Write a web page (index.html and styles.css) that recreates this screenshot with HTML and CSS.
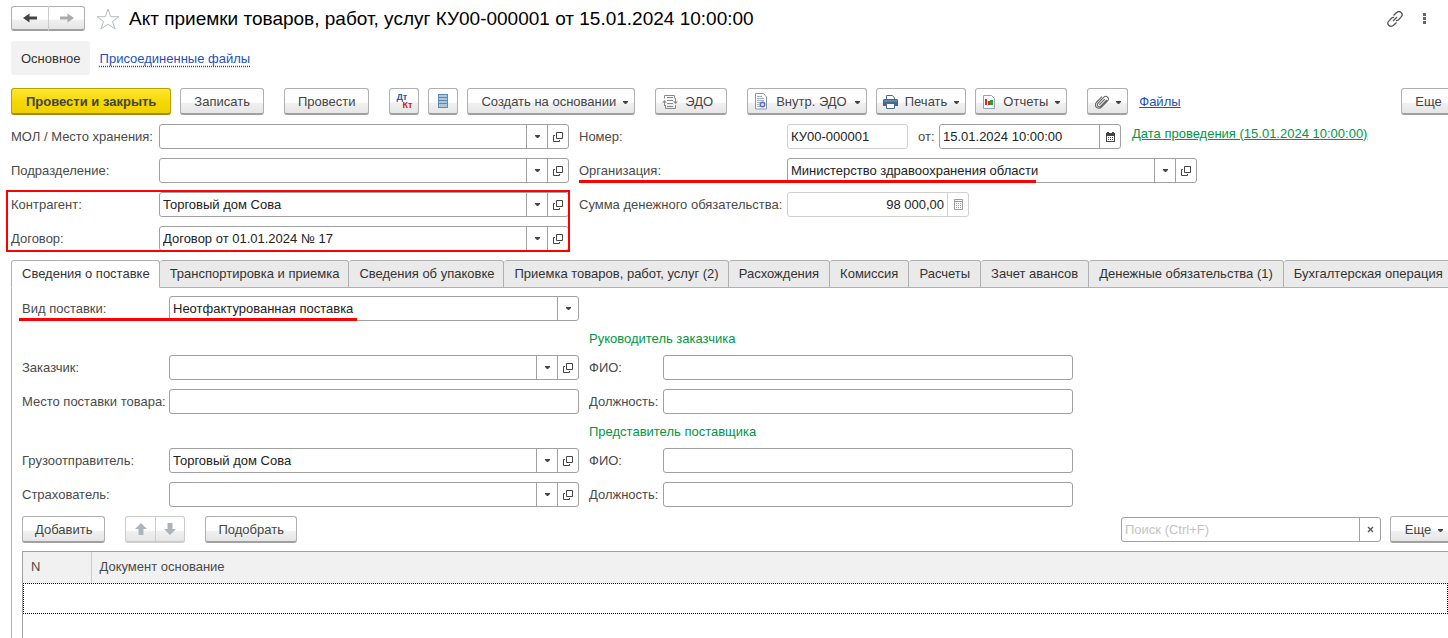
FILE: index.html
```html
<!DOCTYPE html>
<html lang="ru">
<head>
<meta charset="utf-8">
<title>Акт приемки товаров, работ, услуг</title>
<link rel="stylesheet" href="styles.css">
</head>
<body>
<svg class="sprite" aria-hidden="true">
  <symbol id="caret" viewBox="0 0 5 3"><path d="M0 0h5v1L3 3H2L0 1z" fill="currentColor"/></symbol>
  <symbol id="open" viewBox="0 0 10 10"><path d="M3.500.500h6v6h-6zM2 3.500H.500v6h6V8" fill="none" stroke="currentColor"/></symbol>
</svg>
<div class="page">
  <header class="titlebar">
    <div class="pair">
      <button class="btn" aria-label="Назад"><svg width="14" height="12" viewBox="0 0 14 12"><path d="M14 4.500v3H6.500v3L0 6l6.500-4.500v3z" fill="#444"/></svg></button>
      <button class="btn" aria-label="Вперед"><svg width="14" height="12" viewBox="0 0 14 12"><path d="M0 4.500v3h7.500v3L14 6 7.500 1.500v3z" fill="#aaa"/></svg></button>
    </div>
    <button class="plain star" aria-label="В избранное"><svg width="24" height="22" viewBox="0 0 24 22"><path d="M12 1l2.700 7.700H23l-6.600 4.800L19 21l-7-4.700L5 21l2.600-7.500L1 8.700h8.300z" fill="none" stroke="#b4bcc4"/></svg></button>
    <h1>Акт приемки товаров, работ, услуг КУ00-000001 от 15.01.2024 10:00:00</h1>
    <button class="plain" aria-label="Ссылка"><svg width="16" height="16" viewBox="0 0 16 16" fill="none" stroke="#555" stroke-width="1.300"><path d="M6.500 4.500L9.700 1.600a2.900 2.900 0 0 1 4.500 4.300l-2.600 2.900q-1.200 1-2.700.700M9.500 11.500l-3.200 2.900A2.900 2.900 0 0 1 1.800 10.100l2.600-2.900q1.200-1 2.700-.700M6 10l4-4"/></svg></button>
    <button class="plain menu" aria-label="Меню"><svg width="3" height="11" viewBox="0 0 3 11" fill="#666"><path d="M0 0h3v3H0zM0 4h3v3H0zM0 8h3v3H0z"/></svg></button>
  </header>

  <nav class="sections">
    <span class="current">Основное</span>
    <a href="#files">Присоединенные файлы</a>
  </nav>

  <div class="toolbar">
    <div class="group"><button class="btn primary">Провести и закрыть</button><button class="btn">Записать</button></div>
    <div class="group"><button class="btn">Провести</button></div>
    <div class="group">
      <button class="btn icon" aria-label="Проводки"><span class="dtkt"><b>Дт</b><b class="kt">Кт</b></span></button>
      <button class="btn icon" aria-label="Журнал"><svg width="12" height="14" viewBox="0 0 12 14"><path d="M1 0h10v14H1z" fill="#a9c8e0"/><path d="M1 .500h10M1 3.500h10M1 6.500h10M1 9.500h10M1 13.500h10M1.500 0v14M10.500 0v14" stroke="#5f8bb0"/></svg></button>
      <button class="btn menu-btn">Создать на основании<svg class="caret"><use href="#caret"/></svg></button>
    </div>
    <div class="group"><button class="btn pic solo"><svg width="16" height="14" viewBox="0 0 16 14" fill="none" stroke="#888"><path d="M2.500 3.500v-3h10v3M13.500 10v3.500h-10V10M5 2.500h6M5 5.500h6M5 8.500h6M5 11.500h6M2.500 11V6M13.500 3v5"/><path d="M0 7.500L2.500 5 5 7.500zM11 6.500L13.500 9 16 6.500z" fill="#888" stroke="none"/></svg>ЭДО</button></div>
    <div class="group">
      <button class="btn pic wide"><svg width="14" height="17" viewBox="0 0 14 17"><path d="M1.500.500h8L12.500 4v12h-11z" fill="#fff" stroke="#8098ae"/><path d="M3 3.500h5M3 5.500h7M3 7.500h7M3 9.500h3M3 11.500h2M3 13.500h3" stroke="#9ab0c4"/><circle cx="8.500" cy="11.500" r="2.300" fill="#dde" stroke="#6468c4" stroke-width="1.500"/></svg>Внутр. ЭДО<svg class="caret"><use href="#caret"/></svg></button>
      <button class="btn pic"><svg width="15" height="14" viewBox="0 0 15 14"><path d="M3.500 4V.500h6L11.500 3v2" fill="#fff" stroke="#466a88"/><path d="M1 4h13l1 1v6H0V5z" fill="#42698c"/><path d="M1 6h13" stroke="#7fa5c4"/><path d="M3.500 8.500h8v5h-8z" fill="#fff" stroke="#466a88"/></svg>Печать<svg class="caret"><use href="#caret"/></svg></button>
      <button class="btn pic"><svg width="14" height="14" viewBox="0 0 14 14"><path d="M1.500.500h8l3 3v10h-11z" fill="#fff" stroke="#8fa3b5"/><path d="M3 4h2v6H3z" fill="#e02818"/><path d="M6 6h2v4H6z" fill="#d03020"/><path d="M8 5h3v5H8z" fill="#28a038"/></svg>Отчеты<svg class="caret"><use href="#caret"/></svg></button>
    </div>
    <div class="group">
      <button class="btn menu-btn clip" aria-label="Вложения"><svg width="14" height="14" viewBox="0 0 14 14" fill="none" stroke="#666" stroke-width="1.100"><path d="M11.800 5l-6 6.200a2 2 0 0 1-2.900-2.900l6-6.100a2.500 2.500 0 0 1 3.700 3.600l-6.200 6.300A3.200 3.200 0 0 1 1.300 7.500L7 1.700M4.300 9.700l5.500-5.500"/></svg><svg class="caret"><use href="#caret"/></svg></button>
      <a class="files" href="#files">Файлы</a>
    </div>
    <button class="btn more">Еще<svg class="caret"><use href="#caret"/></svg></button>
  </div>

  <div class="head-form">
    <div class="column">
      <div class="row"><label for="mol">МОЛ / Место хранения:</label><div class="field"><input id="mol"><button aria-label="Выбрать"><svg class="caret"><use href="#caret"/></svg></button><button aria-label="Открыть"><svg class="open"><use href="#open"/></svg></button></div></div>
      <div class="row"><label for="dep">Подразделение:</label><div class="field"><input id="dep"><button aria-label="Выбрать"><svg class="caret"><use href="#caret"/></svg></button><button aria-label="Открыть"><svg class="open"><use href="#open"/></svg></button></div></div>
      <div class="column boxed">
        <div class="row"><label for="agent">Контрагент:</label><div class="field"><input id="agent" value="Торговый дом Сова"><button aria-label="Выбрать"><svg class="caret"><use href="#caret"/></svg></button><button aria-label="Открыть"><svg class="open"><use href="#open"/></svg></button></div></div>
        <div class="row"><label for="contract">Договор:</label><div class="field"><input id="contract" value="Договор от 01.01.2024 № 17"><button aria-label="Выбрать"><svg class="caret"><use href="#caret"/></svg></button><button aria-label="Открыть"><svg class="open"><use href="#open"/></svg></button></div></div>
      </div>
    </div>
    <div class="column right">
      <div class="row"><label for="num">Номер:</label><div class="field muted number"><input id="num" value="КУ00-000001" readonly></div><label class="from" for="date">от:</label><div class="field short"><input id="date" value="15.01.2024 10:00:00"><button aria-label="Календарь"><svg width="9" height="10" viewBox="0 0 9 10"><path d="M0 1h1V0h2v1h3V0h2v1h1v9H0z" fill="#444"/><path d="M1 4h7v5H1z" fill="#fff"/><path d="M2 5.500h5M2 7.500h5" stroke="#444" stroke-dasharray="1 1"/></svg></button></div><a class="posted" href="#date">Дата проведения (15.01.2024 10:00:00)</a></div>
      <div class="row marked org"><label for="org">Организация:</label><div class="field"><input id="org" value="Министерство здравоохранения области"><button aria-label="Выбрать"><svg class="caret"><use href="#caret"/></svg></button><button aria-label="Открыть"><svg class="open"><use href="#open"/></svg></button></div></div>
      <div class="row"><label for="sum">Сумма денежного обязательства:</label><div class="field muted short"><input id="sum" class="amount" value="98 000,00" readonly><button aria-label="Калькулятор"><svg width="9" height="11" viewBox="0 0 9 11" fill="none" stroke="#999"><path d="M.500.500h8v10h-8zM1 2.500h7"/><path d="M2 4.500h6M2 6.500h6M2 8.500h6" stroke-dasharray="1 1"/></svg></button></div></div>
    </div>
  </div>

  <div class="tabs" role="tablist">
    <button role="tab" aria-selected="true">Сведения о поставке</button>
    <button role="tab">Транспортировка и приемка</button>
    <button role="tab">Сведения об упаковке</button>
    <button role="tab">Приемка товаров, работ, услуг (2)</button>
    <button role="tab">Расхождения</button>
    <button role="tab">Комиссия</button>
    <button role="tab">Расчеты</button>
    <button role="tab">Зачет авансов</button>
    <button role="tab">Денежные обязательства (1)</button>
    <button role="tab">Бухгалтерская операция</button>
  </div>

  <main class="panel">
    <div class="row marked kind"><label for="kind">Вид поставки:</label><div class="field"><select id="kind"><option>Неотфактурованная поставка</option></select><span class="drop"><svg class="caret"><use href="#caret"/></svg></span></div></div>
    <h2>Руководитель заказчика</h2>
    <div class="lines">
      <div class="row"><label for="customer">Заказчик:</label><div class="field"><input id="customer"><button aria-label="Выбрать"><svg class="caret"><use href="#caret"/></svg></button><button aria-label="Открыть"><svg class="open"><use href="#open"/></svg></button></div><label class="person" for="fio1">ФИО:</label><div class="field"><input id="fio1"></div></div>
      <div class="row"><label for="place">Место поставки товара:</label><div class="field"><input id="place"></div><label class="person" for="post1">Должность:</label><div class="field"><input id="post1"></div></div>
    </div>
    <h2>Представитель поставщика</h2>
    <div class="lines">
      <div class="row"><label for="shipper">Грузоотправитель:</label><div class="field"><input id="shipper" value="Торговый дом Сова"><button aria-label="Выбрать"><svg class="caret"><use href="#caret"/></svg></button><button aria-label="Открыть"><svg class="open"><use href="#open"/></svg></button></div><label class="person" for="fio2">ФИО:</label><div class="field"><input id="fio2"></div></div>
      <div class="row"><label for="insurer">Страхователь:</label><div class="field"><input id="insurer"><button aria-label="Выбрать"><svg class="caret"><use href="#caret"/></svg></button><button aria-label="Открыть"><svg class="open"><use href="#open"/></svg></button></div><label class="person" for="post2">Должность:</label><div class="field"><input id="post2"></div></div>
    </div>
    <div class="commands">
      <button class="btn">Добавить</button>
      <div class="pair faded">
        <button class="btn" aria-label="Вверх"><svg width="12" height="12" viewBox="0 0 12 12"><path d="M6 0l6 6H8.500v6h-5V6H0z" fill="#adb5ba"/></svg></button>
        <button class="btn" aria-label="Вниз"><svg width="12" height="12" viewBox="0 0 12 12"><path d="M6 12l6-6H8.500V0h-5v6H0z" fill="#adb5ba"/></svg></button>
      </div>
      <button class="btn">Подобрать</button>
      <div class="field search"><input aria-label="Поиск" placeholder="Поиск (Ctrl+F)"><button aria-label="Очистить"><svg width="7" height="7" viewBox="0 0 7 7"><path d="M1 1l5 5M6 1L1 6" stroke="#555" stroke-width="1.300"/></svg></button></div>
      <button class="btn more">Еще<svg class="caret"><use href="#caret"/></svg></button>
    </div>
    <div class="sheet">
      <table>
        <thead><tr><th class="n">N</th><th>Документ основание</th></tr></thead>
        <tbody><tr><td></td><td></td></tr></tbody>
      </table>
    </div>
  </main>
</div>
</body>
</html>
```
FILE: styles.css
```css
* { box-sizing: border-box; }
body { margin: 0; overflow: hidden; background: #fff; color: #4a4a4a; font: 13px/16px "Liberation Sans", Arial, sans-serif; }
button, input, select { font: inherit; color: inherit; margin: 0; }
svg { display: block; flex: none; }
a { color: #1f4fb8; }
.sprite { display: none; }
.page { display: flex; flex-direction: column; min-height: 100vh; padding: 6px 0 0 11px; }
.caret { width: 5px; height: 3px; color: #444; }
.open { width: 10px; height: 10px; color: #444; }

.btn { display: inline-flex; align-items: center; justify-content: center; flex: none; height: 27px; padding: 1px 13px 0; border: 1px solid #b0b0b0; border-bottom: 2px solid #a0a0a0; border-radius: 3px; background: linear-gradient(#fff 55%, #f0f0f0 60%, #e6e6e6); color: #444; white-space: nowrap; }
.btn .caret { margin: 1px 0 0 7px; }
.plain { padding: 0; border: 0; background: none; }
.primary { padding: 1px 14px 0; border-color: #b8a000; border-bottom-color: #a08c00; background: linear-gradient(#ffe733, #f5d800 55%, #f0d000); font-weight: bold; }
.icon { width: 30px; padding: 0; }
.menu-btn { padding-right: 6px; }
.pic { padding: 1px 6px 0; gap: 7px; }
.pic.wide { gap: 8px; }
.pic .caret { margin-left: 0; }
.solo { padding-right: 13px; }
.pair { display: flex; }
.pair .btn { width: 37px; height: 25px; padding: 0; }
.pair .btn:first-child { border-radius: 3px 0 0 3px; border-right: 0; }
.pair .btn:last-child { border-left-color: #ccc; border-radius: 0 3px 3px 0; }

.titlebar { display: flex; align-items: center; height: 25px; }
.titlebar h1 { flex: 1; margin: 0; font-size: 19px; line-height: 22px; font-weight: normal; color: #000; white-space: nowrap; }
.star { margin: 0 9px 0 11px; }
.menu { margin: 0 22px 0 20px; }

.sections { display: flex; align-items: center; gap: 10px; margin-top: 10px; }
.current { padding: 10px 9px 8px 10px; border-radius: 3px; background: #f2f2f2; color: #333; }
.sections a { padding-top: 2px; text-decoration: underline dotted; text-underline-offset: 3px; }

.toolbar { display: flex; gap: 20px; margin-top: 13px; }
.group { display: flex; align-items: center; gap: 9px; }
.clip { padding-left: 7px; }
.files { margin-left: 2px; }
.dtkt { display: flex; flex-direction: column; width: 16px; font-size: 9px; line-height: 8px; text-align: left; color: #2360a0; }
.kt { align-self: flex-end; color: #d02010; }
.more { width: 67px; margin: 0 -20px 0 auto; }

.head-form { display: flex; gap: 10px; margin-top: 9px; }
.column, .lines { display: flex; flex-direction: column; gap: 9px; }
.row { display: flex; align-items: center; }
.row label { flex: none; width: 148px; white-space: nowrap; }
.right label { width: 208px; }
.right .from { width: 31px; padding-left: 10px; }
.field { display: flex; flex: 0 1 auto; width: 410px; min-width: 0; height: 25px; border: 1px solid #a0a0a0; border-radius: 3px; background: #fff; color: #222; }
.field input, .field select { flex: 1; min-width: 0; padding: 0 3px; border: 0; outline: 0; background: none; appearance: none; }
.field button, .drop { display: flex; align-items: center; justify-content: center; flex: none; width: 21px; padding: 0; border: 0; border-left: 1px solid #a0a0a0; background: none; }
.field.number { width: 121px; }
.field.short { width: 182px; }
.field.muted, .muted button { border-color: #d0d0d0; }
.field .amount { text-align: right; }
.posted { align-self: flex-start; margin-left: 11px; padding-top: 2px; color: #009646; white-space: nowrap; }

/* Red highlights over the key fields */
.boxed, .marked { position: relative; }
.boxed::after { content: ""; position: absolute; inset: -2px -1px -1px -5px; border: 2px solid #f00; pointer-events: none; }
.marked::after { content: ""; position: absolute; bottom: 0; left: 0; height: 3px; background: #f00; }
.org::after { width: 457px; }
.kind::after { left: -3px; width: 338px; }

.tabs { display: flex; margin-top: 9px; }
.tabs button { flex: none; height: 28px; padding: 0 10px; border: 1px solid #b0b0b0; border-left-width: 0; border-radius: 3px 3px 0 0; background: #eaeaea; color: #333; white-space: nowrap; }
.tabs button:nth-child(-n+4) { padding-right: 9px; }
.tabs button[aria-selected] { border-left-width: 1px; border-bottom-color: #fff; background: #fff; }

.panel { display: flex; flex-direction: column; flex: 1; padding: 8px 0 0 10px; border-left: 1px solid #b0b0b0; }
.panel label { width: 147px; }
.panel .person { width: 84px; padding-left: 10px; }
.panel h2 { margin: 10px 0 8px 567px; font-size: 13px; line-height: 16px; font-weight: normal; color: #009646; }
.commands { display: flex; align-items: center; gap: 20px; margin-top: 9px; }
.commands .btn { padding: 1px 12px 0; }
.commands .pair .btn { width: 30px; height: 27px; padding: 0; }
.faded .btn { border-color: #ccc; }
.field.search { width: 260px; margin-left: auto; }
.search input::placeholder { color: #c4c4bc; opacity: 1; }
.commands .more { width: 68px; margin: 0 -10px 0 -11px; }

.sheet { flex: 1; margin-top: 8px; border: solid #a0a0a0; border-width: 1px 0 0 1px; overflow: hidden; }
table { width: 100%; border-collapse: collapse; }
th { height: 31px; padding: 0 8px 1px; border-left: 1px solid #ccc; background: #f1f1f1; font-weight: normal; text-align: left; }
.n { width: 68px; border-left: 0; }
td { height: 31px; padding: 0; }
tbody tr { outline: 1px dotted #000; outline-offset: -1px; }
```
